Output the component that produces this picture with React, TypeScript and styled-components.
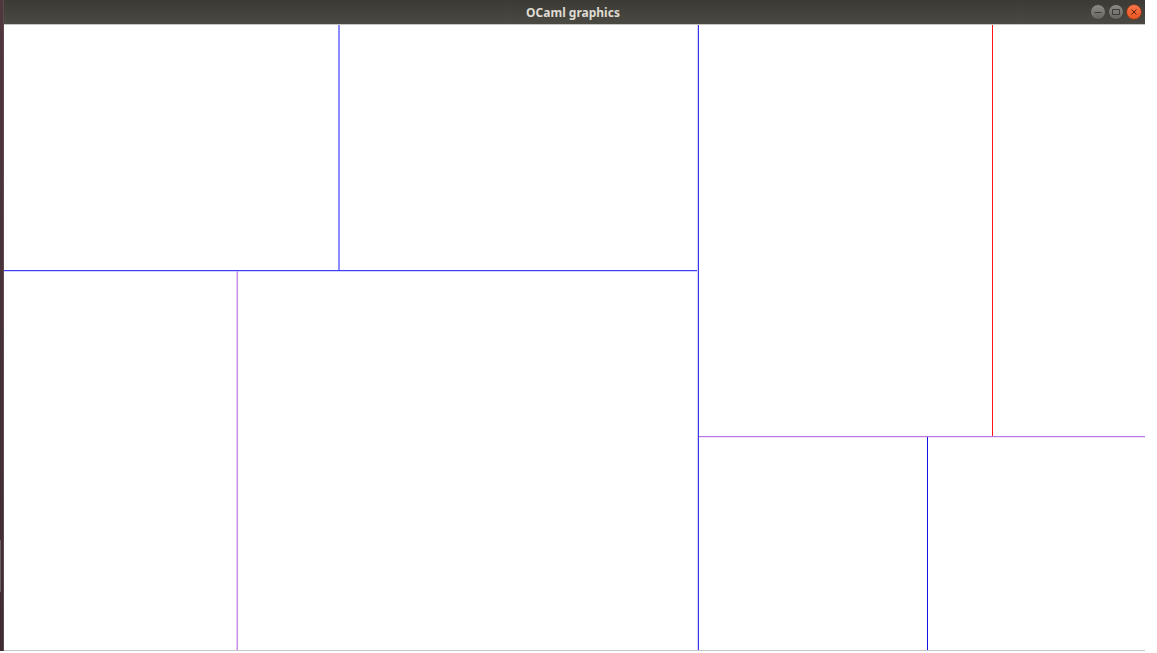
import React from "react";
import styled, { createGlobalStyle } from "styled-components";

const GlobalStyle = createGlobalStyle`
  * { box-sizing: border-box; }
  html, body { margin: 0; background: #fff; }
`;

const Desktop = styled.div`
  display: flex;
  height: 100vh;
  padding: 0 12px 2px 0;
  background: #fff;
`;

const LauncherEdge = styled.div`
  display: flex;
  flex-direction: column;
  flex: 0 0 4px;
  background: linear-gradient(#50363d, #3e2c32);
  border-right: 1px solid #5c4a50;
`;

const LauncherSpace = styled.div<{ $grow: number }>`
  flex: ${(p) => p.$grow} 0 0;
`;

const LauncherMark = styled.div`
  flex: 52 0 0;
  width: 1px;
  background: #6b5d63;
`;

const Window = styled.main`
  display: flex;
  flex-direction: column;
  flex: 1;
  min-width: 0;
  border-bottom: 1px solid #c6c6c6;
`;

const TitleBar = styled.header`
  display: grid;
  grid-template-columns: 1fr auto 1fr;
  align-items: center;
  flex: 0 0 24px;
  padding: 1px 3px 0 0;
  background: linear-gradient(#3b3a35, #4a4942);
`;

const Title = styled.h1`
  grid-column: 2;
  margin: 0;
  color: #dfdbd2;
  font: 700 12px/23px "Noto Sans", sans-serif;
`;

const Controls = styled.div`
  display: flex;
  justify-content: flex-end;
  gap: 2px;
  padding-bottom: 1px;
`;

const ControlButton = styled.button<{ $close?: boolean }>`
  width: 16px;
  height: 16px;
  padding: 0;
  border: 1px solid ${(p) => (p.$close ? "#7a3a22" : "#42413b")};
  border-radius: 50%;
  color: ${(p) => (p.$close ? "#5c2410" : "#3c3b37")};
  background: ${(p) =>
    p.$close
      ? "linear-gradient(#f8764a, #e95420)"
      : "linear-gradient(#8b8a84, #66655f)"};

  svg { display: block; }
`;

const Canvas = styled.div`
  display: flex;
  flex: 1;
  min-height: 0;
  border-top: 1px solid #c8c5c0;
`;

const Split = styled.div<{ $grow: number; $column?: boolean }>`
  display: flex;
  flex-direction: ${(p) => (p.$column ? "column" : "row")};
  flex: ${(p) => p.$grow} 0 0;
  min-width: 0;
  min-height: 0;
`;

const Line = styled.div<{ $color: string; $width?: number; $edge?: string }>`
  flex: 0 0 ${(p) => p.$width ?? 1}px;
  background: ${(p) => p.$color};
  box-shadow: ${(p) => p.$edge ?? "none"};
`;

const Glyph = ({ d }: { d: string }) => (
  <svg width="14" height="14" viewBox="0 0 14 14" fill="none" stroke="currentColor" aria-hidden="true">
    <path d={d} />
  </svg>
);

export default function App() {
  return (
    <>
      <GlobalStyle />
      <Desktop>
        <LauncherEdge>
          <LauncherSpace $grow={540} />
          <LauncherMark />
          <LauncherSpace $grow={59} />
        </LauncherEdge>
        <Window>
          <TitleBar>
            <Title>OCaml graphics</Title>
            <Controls>
              <ControlButton aria-label="Minimize">
                <Glyph d="M3.5 7.5h7" />
              </ControlButton>
              <ControlButton aria-label="Maximize">
                <Glyph d="M3.5 4.5h7v5h-7z" />
              </ControlButton>
              <ControlButton $close aria-label="Close">
                <Glyph d="M4.5 4.5l5 5M9.5 4.5l-5 5" />
              </ControlButton>
            </Controls>
          </TitleBar>
          <Canvas>
            <Split $grow={694} $column>
              <Split $grow={245}>
                <Split $grow={334} />
                <Line $color="#8c8cff" $width={2} />
                <Split $grow={358} />
              </Split>
              <Line $color="#3c3cff" $edge="0 1px #d4d4ff" />
              <Split $grow={379}>
                <Split $grow={233} />
                <Line $color="#cb8ee6" $edge="-1px 0 #e6c8f4" />
                <Split $grow={460} />
              </Split>
            </Split>
            <Line $color="#3838ea" $edge="-1px 0 #d0d0fa" />
            <Split $grow={446} $column>
              <Split $grow={411}>
                <Split $grow={293} />
                <Line $color="#ff1414" />
                <Split $grow={152} />
              </Split>
              <Line $color="#bd78e0" $edge="0 1px #f0e0fa" />
              <Split $grow={213}>
                <Split $grow={228} />
                <Line $color="#1414e0" />
                <Split $grow={217} />
              </Split>
            </Split>
          </Canvas>
        </Window>
      </Desktop>
    </>
  );
}
